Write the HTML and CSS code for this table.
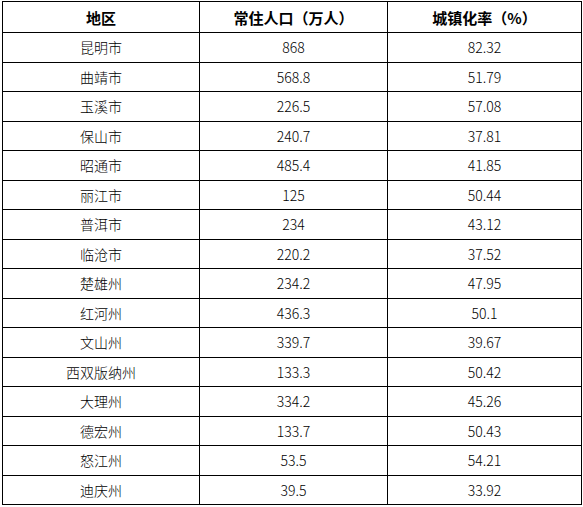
FILE: index.html
```html
<!DOCTYPE html>
<html lang="zh-CN">
<head>
<meta charset="utf-8">
<link rel="stylesheet" href="styles.css">
</head>
<body>
<table class="data">
<colgroup><col class="c1"><col class="c2"><col class="c3"></colgroup>
<thead>
<tr><th>地区</th><th>常住人口（万人）</th><th>城镇化率（%）</th></tr>
</thead>
<tbody>
<tr><td>昆明市</td><td>868</td><td>82.32</td></tr>
<tr><td>曲靖市</td><td>568.8</td><td>51.79</td></tr>
<tr><td>玉溪市</td><td>226.5</td><td>57.08</td></tr>
<tr><td>保山市</td><td>240.7</td><td>37.81</td></tr>
<tr><td>昭通市</td><td>485.4</td><td>41.85</td></tr>
<tr><td>丽江市</td><td>125</td><td>50.44</td></tr>
<tr><td>普洱市</td><td>234</td><td>43.12</td></tr>
<tr><td>临沧市</td><td>220.2</td><td>37.52</td></tr>
<tr><td>楚雄州</td><td>234.2</td><td>47.95</td></tr>
<tr><td>红河州</td><td>436.3</td><td>50.1</td></tr>
<tr><td>文山州</td><td>339.7</td><td>39.67</td></tr>
<tr><td>西双版纳州</td><td>133.3</td><td>50.42</td></tr>
<tr><td>大理州</td><td>334.2</td><td>45.26</td></tr>
<tr><td>德宏州</td><td>133.7</td><td>50.43</td></tr>
<tr><td>怒江州</td><td>53.5</td><td>54.21</td></tr>
<tr><td>迪庆州</td><td>39.5</td><td>33.92</td></tr>
</tbody>
</table>
</body>
</html>
```
FILE: styles.css
```css
html, body {
  margin: 0;
  padding: 0;
  background: #fff;
}
body {
  padding: 1px 0 0 2px;
  font-family: "Noto Sans CJK SC", "DejaVu Sans", sans-serif;
  color: #000;
}
.data {
  border-collapse: collapse;
  table-layout: fixed;
  width: 579px;
}
.c1 { width: 197px; }
.c2 { width: 188px; }
.c3 { width: 194px; }
.data th, .data td {
  border: 1px solid #000;
  padding: 0;
  text-align: center;
  vertical-align: middle;
  line-height: 1;
}
.data th {
  height: 30px;
  font-size: 15px;
  font-weight: bold;
}
.data td {
  height: 28.5px;
  font-size: 14px;
  font-weight: 300;
}
```
